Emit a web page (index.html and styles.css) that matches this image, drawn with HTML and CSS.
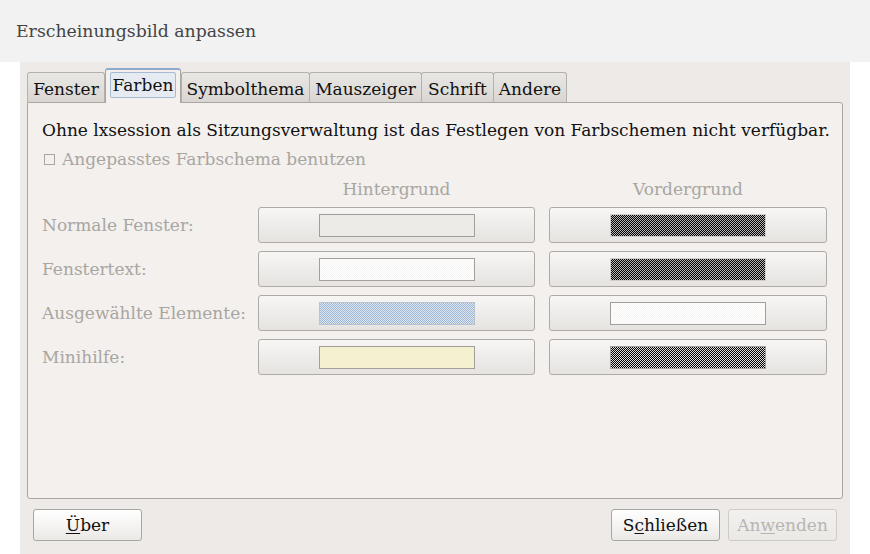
FILE: index.html
```html
<!DOCTYPE html>
<html>
<head>
<meta charset="utf-8">
<link rel="stylesheet" href="styles.css">
</head>
<body>
<div class="titlebar">Erscheinungsbild anpassen</div>
<div class="window">
  <div class="tabs">
    <div class="tab t-fenster">Fenster</div>
    <div class="tab active t-farben"><span class="tab-focus">Farben</span></div>
    <div class="tab t-symbol">Symbolthema</div>
    <div class="tab t-maus">Mauszeiger</div>
    <div class="tab t-schrift">Schrift</div>
    <div class="tab t-andere">Andere</div>
  </div>
  <div class="panel">
    <div class="notice">Ohne lxsession als Sitzungsverwaltung ist das Festlegen von Farbschemen nicht verfügbar.</div>
    <div class="check"><span class="box"></span>Angepasstes Farbschema benutzen</div>
    <div class="grid">
      <div></div>
      <div class="colhead">Hintergrund</div>
      <div class="colhead">Vordergrund</div>

      <div class="label">Normale Fenster:</div>
      <div class="cbtn"><span class="sw sw-normal"></span></div>
      <div class="cbtn"><span class="sw sw-dark"></span></div>

      <div class="label">Fenstertext:</div>
      <div class="cbtn"><span class="sw sw-white"></span></div>
      <div class="cbtn"><span class="sw sw-dark"></span></div>

      <div class="label">Ausgewählte Elemente:</div>
      <div class="cbtn"><span class="sw sw-blue"></span></div>
      <div class="cbtn"><span class="sw sw-white"></span></div>

      <div class="label">Minihilfe:</div>
      <div class="cbtn"><span class="sw sw-yellow"></span></div>
      <div class="cbtn"><span class="sw sw-black"></span></div>
    </div>
  </div>
  <div class="actions">
    <div class="btn"><u>Ü</u>ber</div>
    <div class="spacer"></div>
    <div class="btn">S<u>c</u>hließen</div>
    <div class="btn disabled">An<u>w</u>enden</div>
  </div>
</div>
</body>
</html>
```
FILE: styles.css
```css
html, body {
  margin: 0;
  padding: 0;
  background: #ffffff;
  font-family: "DejaVu Serif", serif;
  height: 100%;
  overflow: hidden;
}
.titlebar {
  height: 62px;
  box-sizing: border-box;
  background: #f2f2f2;
  color: #444;
  font-size: 17.3px;
  padding: 20px 0 0 16px;
  line-height: 22px;
}
.window {
  margin: 0 20px;
  height: 492px;
  background: #edeae7;
  box-sizing: border-box;
  padding: 10px 7px 0 7px;
  display: flex;
  flex-direction: column;
}
.tabs {
  display: flex;
  height: 30px;
  align-items: flex-end;
  position: relative;
  z-index: 1;
}
.tab {
  flex: none;
  height: 30px;
  box-sizing: border-box;
  border: 1px solid #b4b0ab;
  border-bottom: none;
  border-radius: 3px 3px 0 0;
  background: linear-gradient(#e9e7e4, #d9d6d2);
  font-size: 17px;
  color: #111;
  padding: 1px 0 0 0;
  line-height: 31px;
  margin-right: -1px;
  white-space: nowrap;
  text-align: center;
}
.t-fenster { width: 78px; }
.t-farben { width: 76px; }
.t-symbol { width: 129px; }
.t-maus { width: 113px; }
.t-schrift { width: 73px; }
.t-andere { width: 74px; }
.tab.active {
  height: 35px;
  margin-bottom: -1px;
  background: #f3f0ed;
  border-color: #a9a6a2;
  border-top: 2px solid #8eaad0;
  padding: 2px 4px 0 4px;
  margin-left: 1px;
  margin-right: 0;
}
.tab-focus {
  display: block;
  border: 1px solid #a6bad4;
  background: #e6ebf2;
  border-radius: 2px;
  line-height: 24px;
  padding: 0;
}
.panel {
  height: 397px;
  box-sizing: border-box;
  background: #f3f0ed;
  border: 1px solid #a9a6a2;
  border-radius: 0 3px 3px 3px;
  padding: 16px 14px 0 14px;
}
.notice {
  font-size: 17px;
  color: #111;
  line-height: 22px;
  white-space: nowrap;
}
.check {
  font-size: 17px;
  color: #a9a6a2;
  line-height: 22px;
  margin-top: 7px;
  display: flex;
  align-items: center;
}
.box {
  width: 11px;
  height: 11px;
  border: 1px solid #a9a6a2;
  box-sizing: border-box;
  margin: 0 7px 0 2px;
}
.grid {
  display: grid;
  grid-template-columns: 202px 277px 278px;
  column-gap: 14px;
  row-gap: 8px;
  margin-top: 9px;
}
.colhead {
  font-size: 17px;
  color: #a9a6a2;
  text-align: center;
  line-height: 20px;
}
.label {
  font-size: 17px;
  color: #a9a6a2;
  display: flex;
  align-items: center;
  white-space: nowrap;
}
.cbtn {
  height: 36px;
  box-sizing: border-box;
  border: 1px solid #aeaaa6;
  border-radius: 3px;
  background: linear-gradient(#f7f6f5, #e6e3e0);
  display: flex;
  align-items: center;
  justify-content: center;
}
.sw {
  width: 156px;
  height: 23px;
  box-sizing: border-box;
  border: 1px solid #a29f9b;
  display: block;
}
.sw-normal { background: #edebe8; }
.sw-white {
  background: repeating-conic-gradient(#f6f5f4 0 25%, #ffffff 0 50%) 0 0/2px 2px;
}
.sw-blue {
  background: repeating-conic-gradient(#9db6d6 0 25%, #dfe7f1 0 50%) 0 0/2px 2px;
  border-color: #b8c4d4;
}
.sw-yellow { background: #f4f0d0; }
.sw-dark {
  background: repeating-conic-gradient(#000 0 25%, #b8b6b4 0 50%) 0 0/2px 2px;
  border-color: #d0cdca;
}
.sw-black {
  background: repeating-conic-gradient(#000 0 25%, #e0dedc 0 50%) 0 0/2px 2px;
  border-color: #a29f9b;
}
.actions {
  display: flex;
  align-items: center;
  padding: 10px 6px 0 6px;
  gap: 8px;
}
.spacer { flex: 1; }
.btn {
  width: 109px;
  height: 32px;
  box-sizing: border-box;
  border: 1px solid #a9a6a2;
  border-radius: 3px;
  background: linear-gradient(#ffffff, #ebe9e6);
  font-size: 17px;
  color: #111;
  text-align: center;
  line-height: 30px;
}
.btn u { text-underline-offset: 2px; }
.btn.disabled {
  color: #b8b5b1;
  border-color: #cfccc8;
  background: linear-gradient(#f3f1ef, #ebe9e6);
}
```
